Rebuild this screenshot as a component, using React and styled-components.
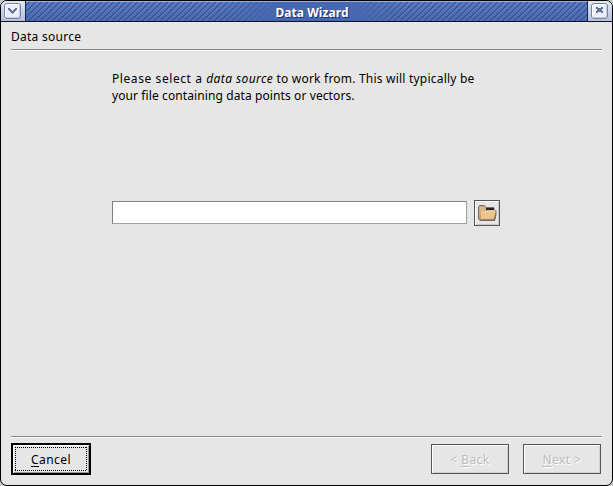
import React from "react";
import styled, { createGlobalStyle, css } from "styled-components";

const Global = createGlobalStyle`
  * { box-sizing: border-box; }
  body { margin: 0; background: #c9c9c9; }
`;

const Window = styled.div`
  width: 613px;
  height: 486px;
  display: flex;
  flex-direction: column;
  background: #e6e6e6;
  border: 1px solid #000;
  border-radius: 7px;
  overflow: hidden;
  color: #000;
  font: 12px/17px "Noto Sans", "Open Sans", sans-serif;
`;

const TitleBar = styled.header`
  display: flex;
  flex: none;
  height: 21px;
  border-bottom: 1px solid #10131c;
`;

const TitleSide = styled.div`
  width: 25px;
  flex: none;
  padding: 2px 0 0 3px;
  background: linear-gradient(#e3e7f3, #b5bfdd);
  ${(p) => (p.$right
    ? css`border-left: 1px solid #182650;`
    : css`border-right: 1px solid #182650;`)}
`;

const WindowButton = styled.button`
  display: block;
  width: 17px;
  height: 16px;
  padding: 0;
  border: 1px solid #7783a6;
  border-radius: 3px;
  background: #eceff9;
  box-shadow: inset 1px 1px #fff, inset -1px -1px #c5cce2;
  svg { display: block; }
`;

const TitleFill = styled.div`
  flex: 1;
  display: flex;
  justify-content: center;
  border-top: 1px solid #9aaee0;
  background:
    linear-gradient(90deg, transparent 195px, #4668b2 252px, #4668b2 322px, transparent 379px),
    repeating-linear-gradient(135deg, #2f4c8e00 0 1.8px, #2f4c8e 2.6px 3px, #7090cc 3.7px, #7090cc00 4.243px),
    linear-gradient(#5c7cc2, #4464ae);
`;

const Title = styled.h1`
  margin: 2px 0 0 11px;
  font-size: 12px;
  line-height: 17px;
  font-weight: 700;
  letter-spacing: 0.06px;
  color: #fff;
  text-shadow: 1px 1px #1c315f;
`;

const Heading = styled.h2`
  margin: 6px 10px 0;
  height: 23px;
  flex: none;
  font-size: 12px;
  line-height: 17px;
  font-weight: 400;
  letter-spacing: 0.26px;
  border-bottom: 1px solid #fff;
  box-shadow: inset 0 -1px #888;
`;

const Content = styled.main`
  flex: 1;
  padding: 19px 112px 0 111px;
`;

const Instructions = styled.p`
  margin: 0;
  height: 130px;
`;

const Line = styled.span`
  display: block;
  white-space: nowrap;
  letter-spacing: ${(p) => p.$spacing};
  em { letter-spacing: 0.4px; }
`;

const Lead = styled.span`
  letter-spacing: 0.58px;
`;

const SourceRow = styled.div`
  display: flex;
  align-items: flex-start;
  gap: 7px;
`;

const SourceInput = styled.input`
  width: 355px;
  height: 23px;
  margin-top: 1px;
  padding: 2px 4px;
  border: 1px solid;
  border-color: #808080 #a0a0a0 #a0a0a0 #808080;
  border-radius: 0;
  outline: none;
  background: #fff;
  font: inherit;
`;

const BrowseButton = styled.button`
  width: 26px;
  height: 26px;
  padding: 2px;
  border: 1px solid #555;
  background: #e6e6e6;
  box-shadow: inset 1px 1px #fff, inset -1px -1px #c8c8c8;
  svg { display: block; }
`;

const Footer = styled.footer`
  display: flex;
  flex: none;
  align-items: center;
  margin: 0 10px;
  height: 49px;
  padding: 0 1px 5px 0;
  border-top: 1px solid #888;
  box-shadow: inset 0 1px #fff;
`;

const Button = styled.button`
  width: 78px;
  height: 30px;
  padding: 1px 0 0;
  font: inherit;
  letter-spacing: 0.45px;
  color: #000;
  background: #e6e6e6;
  border: 1px solid #555;
  box-shadow: inset 1px 1px #fff, inset -1px -1px #d0d0d0;
  &:disabled { color: #bcbcbc; text-shadow: 1px 1px #fff; }
  u { text-underline-offset: 2px; text-decoration-thickness: 1px; text-decoration-skip-ink: none; }
  & + & { margin-left: 14px; }
`;

const DefaultButton = styled(Button)`
  width: 80px;
  height: 32px;
  margin-right: auto;
  padding: 1px;
  border: 1px solid #000;
  box-shadow: inset 0 0 0 1px #000, inset 2px 2px #fff, inset -2px -2px #999;
`;

const FocusRing = styled.span`
  display: flex;
  align-items: center;
  justify-content: center;
  width: 72px;
  height: 24px;
  margin: 0 auto;
  padding-top: 1px;
  background: repeating-linear-gradient(90deg, #000 0 1px, transparent 1px 2px) top / 100% 1px no-repeat,
    repeating-linear-gradient(90deg, #000 0 1px, transparent 1px 2px) bottom / 100% 1px no-repeat,
    repeating-linear-gradient(#000 0 1px, transparent 1px 2px) left / 1px 100% no-repeat,
    repeating-linear-gradient(#000 0 1px, transparent 1px 2px) right / 1px 100% no-repeat;
`;

const MenuIcon = () => (
  <svg width="15" height="14" viewBox="0 0 15 14" shapeRendering="crispEdges">
    <path d="M3 4h2v1h1v1h1v1h1V6h1V5h1V4h2v2h-1v1h-1v1H9v1H8v1H7V9H6V8H5V7H4V6H3z" fill="#65759d" />
  </svg>
);

const CloseIcon = () => (
  <svg width="15" height="14" viewBox="0 0 15 14" shapeRendering="crispEdges">
    <path d="M4 3h2v1h3V3h2v2h-1v2h1v2H9V8H6v1H4V7h1V5H4z" fill="#65759d" />
  </svg>
);

const FolderIcon = () => (
  <svg width="20" height="20" viewBox="0 0 20 20">
    <path d="M1.5 16V3.5l1-1h5l1.5 2h8v3H19v3l-1.5 6.5h-15z" fill="#b99a69" stroke="#77746b" />
    <path d="M2.5 14V4.5l1-1H7l2 2V8H4z" fill="#d8b888" />
    <path d="M9 5h8v2.2H9z" fill="#272521" />
    <path d="M3.5 8.5h5l1.5-1h8.5L17 16H3.5z" fill="#ecc58e" stroke="#b99a69" strokeWidth=".4" />
    <path d="M4 9h5l1-1h8" fill="none" stroke="#fbdcae" />
    <path d="M3 17.5h14.5l1.5-6" fill="none" stroke="#6a6a67" />
  </svg>
);

export default function App() {
  return (
    <>
      <Global />
      <Window>
        <TitleBar>
          <TitleSide>
            <WindowButton aria-label="Window menu"><MenuIcon /></WindowButton>
          </TitleSide>
          <TitleFill><Title>Data Wizard</Title></TitleFill>
          <TitleSide $right>
            <WindowButton aria-label="Close"><CloseIcon /></WindowButton>
          </TitleSide>
        </TitleBar>
        <Heading>Data source</Heading>
        <Content>
          <Instructions>
            <Line $spacing="0.21px"><Lead>Please select a </Lead><em>data source</em> to work from. This will typically be</Line>
            <Line $spacing="0.1px">your file containing data points or vectors.</Line>
          </Instructions>
          <SourceRow>
            <SourceInput aria-label="Data source" />
            <BrowseButton aria-label="Browse"><FolderIcon /></BrowseButton>
          </SourceRow>
        </Content>
        <Footer>
          <DefaultButton><FocusRing><span><u>C</u>ancel</span></FocusRing></DefaultButton>
          <Button disabled>&lt; <u>B</u>ack</Button>
          <Button disabled><u>N</u>ext &gt;</Button>
        </Footer>
      </Window>
    </>
  );
}
